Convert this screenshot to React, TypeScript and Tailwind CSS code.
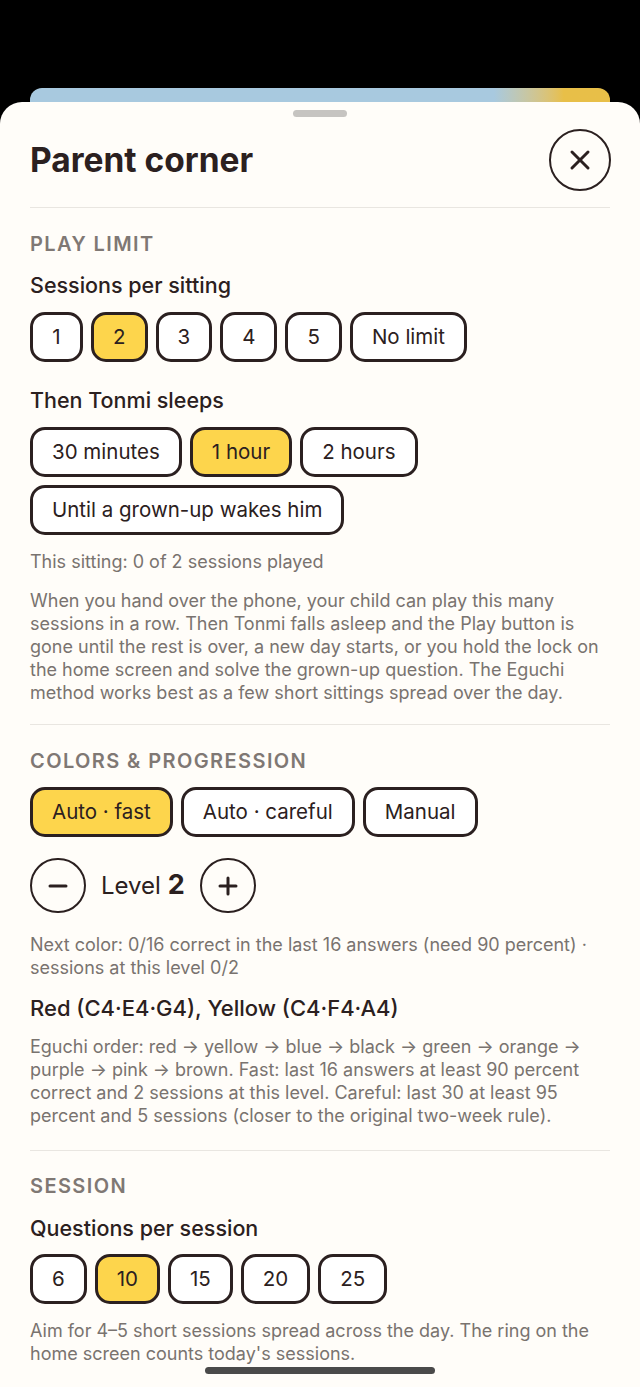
import { useState } from "react";

const font = { fontFamily: "Inter, 'Noto Sans', sans-serif" };

function Chip({
  label,
  active,
  onClick,
}: {
  label: string;
  active?: boolean;
  onClick?: () => void;
}) {
  return (
    <button
      onClick={onClick}
      className={
        "h-[50px] min-w-[53px] px-[19px] rounded-[15px] border-[3px] border-[#2b2020] text-[20.5px] text-[#2b2020] leading-none " +
        (active ? "bg-[#fdd54c]" : "bg-white")
      }
    >
      {label}
    </button>
  );
}

function ChipGroup({
  options,
  value,
  onChange,
}: {
  options: string[];
  value: string;
  onChange: (v: string) => void;
}) {
  return (
    <div className="flex flex-wrap gap-x-[8px] gap-y-[8px]">
      {options.map((o) => (
        <Chip key={o} label={o} active={o === value} onClick={() => onChange(o)} />
      ))}
    </div>
  );
}

function SectionLabel({ children }: { children: string }) {
  return (
    <div className="text-[20px] leading-[24px] font-semibold tracking-[0.07em] text-[#7f7874]">
      {children}
    </div>
  );
}

function FieldLabel({ children, className = "" }: { children: string; className?: string }) {
  return (
    <div className={"text-[21.5px] leading-[26px] font-medium text-[#2b2020] " + className}>
      {children}
    </div>
  );
}

function CircleBtn({ kind, onClick }: { kind: "minus" | "plus"; onClick: () => void }) {
  return (
    <button
      onClick={onClick}
      className="w-[56px] h-[55px] rounded-full border-[2.5px] border-[#2b2020] flex items-center justify-center bg-transparent"
    >
      <svg width="22" height="22" viewBox="0 0 22 22" fill="none" stroke="#2b2020" strokeWidth="3" strokeLinecap="round">
        <line x1="3" y1="11" x2="19" y2="11" />
        {kind === "plus" && <line x1="11" y1="3" x2="11" y2="19" />}
      </svg>
    </button>
  );
}

export default function App() {
  const [sessions, setSessions] = useState("2");
  const [sleep, setSleep] = useState("1 hour");
  const [mode, setMode] = useState("Auto · fast");
  const [level, setLevel] = useState(2);
  const [questions, setQuestions] = useState("10");

  return (
    <div className="min-h-[1387px] h-[1387px] overflow-hidden bg-black pt-[88px] relative" style={font}>
      <div className="mx-[30px] h-[14px] rounded-t-[12px] bg-linear-to-r from-[#a8c9df] from-[80%] to-[#e8bf48] to-[92%]" />
      <div className="bg-[#fffdf9] rounded-t-[22px] px-[30px] h-full">
        <div className="flex justify-center pt-[8px]">
          <div className="w-[54px] h-[7px] rounded-full bg-[#c6c4c1]" />
        </div>

        <div className="mt-[12px] flex items-center justify-between">
          <h1 className="text-[33.5px] font-bold text-[#2b2020]">Parent corner</h1>
          <button className="w-[62px] h-[62px] -mr-px rounded-full border-[2.5px] border-[#2b2020] flex items-center justify-center">
            <svg width="22" height="22" viewBox="0 0 22 22" fill="none" stroke="#2b2020" strokeWidth="3" strokeLinecap="round">
              <line x1="3" y1="3" x2="19" y2="19" />
              <line x1="19" y1="3" x2="3" y2="19" />
            </svg>
          </button>
        </div>

        <div className="mt-[16px] h-px bg-[#e9e6e1]" />

        <div className="mt-[24px]">
          <SectionLabel>PLAY LIMIT</SectionLabel>
        </div>
        <FieldLabel className="mt-[16px]">Sessions per sitting</FieldLabel>
        <div className="mt-[14px]">
          <ChipGroup options={["1", "2", "3", "4", "5", "No limit"]} value={sessions} onChange={setSessions} />
        </div>
        <FieldLabel className="mt-[25px]">Then Tonmi sleeps</FieldLabel>
        <div className="mt-[14px]">
          <ChipGroup
            options={["30 minutes", "1 hour", "2 hours", "Until a grown-up wakes him"]}
            value={sleep}
            onChange={setSleep}
          />
        </div>
        <p className="mt-[15px] text-[18px] leading-[24px] text-[#79736f]">
          This sitting: 0 of {sessions === "No limit" ? "∞" : sessions} sessions played
        </p>
        <p className="mt-[15px] text-[18px] leading-[23px] text-[#79736f]">
          When you hand over the phone, your child can play this many sessions in a row. Then Tonmi falls asleep and
          the Play button is gone until the rest is over, a new day starts, or you hold the lock on the home screen and
          solve the grown-up question. The Eguchi method works best as a few short sittings spread over the day.
        </p>

        <div className="mt-[20px] h-px bg-[#e9e6e1]" />

        <div className="mt-[24px]">
          <SectionLabel>COLORS &amp; PROGRESSION</SectionLabel>
        </div>
        <div className="mt-[14px]">
          <ChipGroup options={["Auto · fast", "Auto · careful", "Manual"]} value={mode} onChange={setMode} />
        </div>
        <div className="mt-[21px] flex items-center gap-[15px]">
          <CircleBtn kind="minus" onClick={() => setLevel((l) => Math.max(1, l - 1))} />
          <div className="text-[24px] leading-none text-[#2b2020] pb-[2px]">
            Level <span className="font-bold text-[27px]">{level}</span>
          </div>
          <CircleBtn kind="plus" onClick={() => setLevel((l) => Math.min(9, l + 1))} />
        </div>
        <p className="mt-[20px] text-[18px] leading-[23px] text-[#79736f]">
          Next color: 0/16 correct in the last 16 answers (need 90 percent) · sessions at this level 0/2
        </p>
        <div className="mt-[15px] text-[22px] leading-[28px] font-medium text-[#2b2020]">
          Red (C4·E4·G4), Yellow (C4·F4·A4)
        </div>
        <p className="mt-[13px] text-[18px] leading-[23px] text-[#79736f]">
          Eguchi order: red → yellow → blue → black → green → orange → purple → pink → brown. Fast: last 16 answers at
          least 90 percent correct and 2 sessions at this level. Careful: last 30 at least 95 percent and 5 sessions
          (closer to the original two-week rule).
        </p>

        <div className="mt-[23px] h-px bg-[#e9e6e1]" />

        <div className="mt-[23px]">
          <SectionLabel>SESSION</SectionLabel>
        </div>
        <FieldLabel className="mt-[17px]">Questions per session</FieldLabel>
        <div className="mt-[13px]">
          <ChipGroup options={["6", "10", "15", "20", "25"]} value={questions} onChange={setQuestions} />
        </div>
        <p className="mt-[15px] text-[18px] leading-[23px] text-[#79736f]">
          Aim for 4–5 short sessions spread across the day. The ring on the home screen counts today's sessions.
        </p>
      </div>

      <div className="absolute bottom-[13px] left-1/2 -translate-x-1/2 w-[230px] h-[7px] rounded-full bg-[#4a4a4a]" />
    </div>
  );
}
